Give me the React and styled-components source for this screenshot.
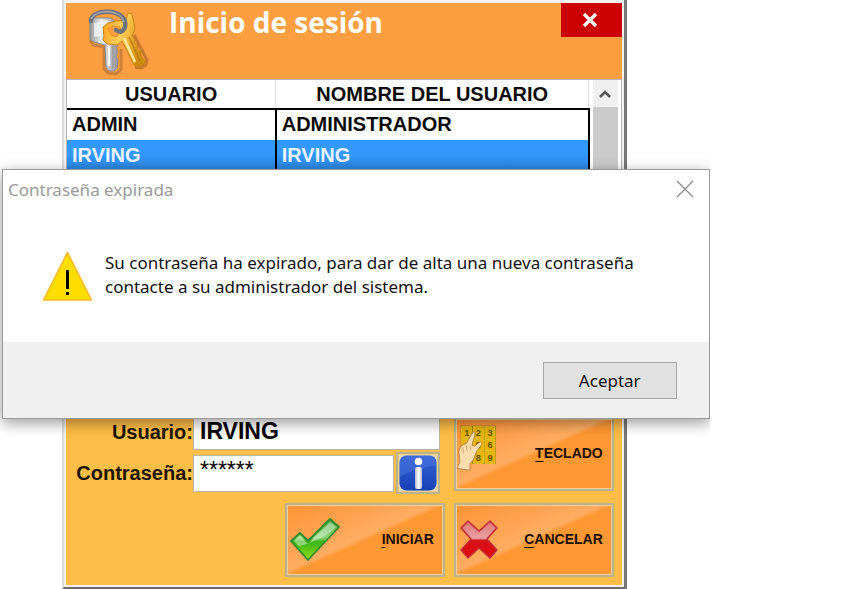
import React, { useState } from 'react';
import styled, { createGlobalStyle } from 'styled-components';

const GlobalStyle = createGlobalStyle`
  * {
    box-sizing: border-box;
  }
  body {
    margin: 0;
    background: #fff;
    font-family: 'Liberation Sans', Arial, sans-serif;
  }
  button, input {
    font-family: inherit;
    border-radius: 0;
  }
`;

const Desktop = styled.main`
  position: relative;
  width: 83.6%;
  padding-left: 62px;
  padding-right: 83px;
  overflow: hidden;
`;

const Window = styled.section`
  display: flex;
  flex-direction: column;
  padding: 3px 2px 2px;
  background: #f4f2f0;
  border-left: 2px solid #dcdcdc;
  border-right: 3px solid #777;
  border-bottom: 3px solid #6c6a6c;
`;

const TitleBar = styled.header`
  display: flex;
  align-items: flex-start;
  height: 76px;
  padding-left: 20px;
  background: #fd9f40;
`;

const KeysIcon = styled.svg`
  flex: none;
  width: 64px;
  height: 72px;
  margin-top: 2px;
`;

const Title = styled.h1`
  flex: 1;
  margin: 0 0 0 19px;
  font: 700 28px/38px 'Open Sans', 'Noto Sans', sans-serif;
  color: #fff;
`;

const CloseButton = styled.button`
  display: flex;
  align-items: center;
  justify-content: center;
  width: 61px;
  height: 34px;
  padding: 0;
  border: 0;
  background: #cb0000;
`;

const UserList = styled.div`
  display: flex;
  height: 324px;
  padding-right: 3px;
  background: #fff;
  border: 1px solid #b5b5b5;
`;

const Table = styled.table`
  flex: 1;
  align-self: flex-start;
  table-layout: fixed;
  border-collapse: collapse;
  font-size: 20px;
  font-weight: 700;
  line-height: 30px;
  color: #0c0c0c;
`;

const HeadCell = styled.th`
  width: ${(p) => p.$width || 'auto'};
  height: 29px;
  padding: 0;
  line-height: 28px;
  border-right: 1px solid #ddd;
  border-bottom: 2px solid #000;
`;

const Row = styled.tr`
  color: ${(p) => (p.$selected ? '#eaf4ff' : '#0c0c0c')};
  background: ${(p) => (p.$selected ? 'linear-gradient(#3399ff 40%, #2c85df)' : '#fff')};
`;

const Cell = styled.td`
  height: 31px;
  padding: 0 5px 2px;
  line-height: 28px;
  border-right: 2px solid #000;
`;

const ScrollBar = styled.div`
  display: flex;
  flex-direction: column;
  width: 25px;
  margin-left: 3px;
  background: #f0f0f0;
`;

const ScrollArrow = styled.button`
  display: flex;
  align-items: center;
  justify-content: center;
  height: 27px;
  padding: 0;
  border: 0;
  background: #f0f0f0;
`;

const ScrollThumb = styled.div`
  flex: 1;
  background: #cbcbcb;
`;

const Form = styled.form`
  display: grid;
  grid-template-columns: minmax(0, 1fr) 160px;
  align-items: center;
  gap: 9px 14px;
  padding: 10px 8px 8px;
  background: #ffbe48;
`;

const Fields = styled.div`
  display: flex;
  flex-direction: column;
  gap: 2px;
`;

const Field = styled.div`
  display: flex;
  align-items: center;
`;

const Label = styled.label`
  width: 119px;
  font-size: 20px;
  font-weight: 700;
  line-height: 24px;
  text-align: right;
  color: #1c1400;
`;

const Input = styled.input`
  flex: 1;
  min-width: 0;
  height: 37px;
  padding: 0 6px;
  font-size: 23px;
  font-weight: 700;
  color: #000;
  background: #fff;
  border: 1px solid #b9b6a4;
  outline: 0;
`;

const PasswordInput = styled(Input)`
  padding-bottom: 6px;
  font-weight: 400;
`;

const InfoButton = styled.button`
  width: 44px;
  height: 42px;
  margin-left: 2px;
  padding: 1px;
  border: 2px solid #b9b28c;
  background: #f3d08a;

  svg {
    display: block;
    width: 100%;
    height: 100%;
  }
`;

const Actions = styled.div`
  grid-column: 1 / -1;
  display: flex;
  justify-content: flex-end;
  gap: 9px;
`;

const ActionButton = styled.button`
  display: flex;
  align-items: center;
  justify-content: space-between;
  width: 160px;
  height: 74px;
  padding: 0 9px 0 1px;
  font-size: 14px;
  font-weight: 700;
  color: #1c1000;
  border: 2px solid #b9b28c;
  outline: 1px solid #f0d29a;
  outline-offset: -3px;
  background: linear-gradient(to bottom right, #ff9234 0%, #ffad62 47%, #ff9733 51%, #ff9733 100%);

  svg {
    width: 52px;
    height: 56px;
    margin-bottom: 12px;
  }
  span {
    margin-bottom: 2px;
  }
  u {
    text-underline-offset: 3px;
  }
`;

const Dialog = styled.div`
  position: absolute;
  top: 169px;
  left: 2px;
  right: 0;
  display: flex;
  flex-direction: column;
  font-family: 'Noto Sans', 'Open Sans', sans-serif;
  background: #fff;
  border: 1px solid #9b9b9b;
  box-shadow: 0 4px 14px rgba(0, 0, 0, 0.4);
`;

const DialogHeader = styled.div`
  display: flex;
  align-items: center;
  justify-content: space-between;
  height: 38px;
  padding: 0 15px 0 5px;
`;

const DialogTitle = styled.h2`
  margin: 0;
  font-size: 17px;
  font-weight: 400;
  color: #9a9a9a;
`;

const DialogClose = styled.button`
  display: flex;
  padding: 0;
  border: 0;
  background: none;
`;

const DialogBody = styled.div`
  display: flex;
  align-items: flex-start;
  gap: 12px;
  padding: 43px 20px 40px 39px;
`;

const Message = styled.p`
  margin: 0;
  font-size: 17px;
  line-height: 24px;
  color: #111;
`;

const DialogFooter = styled.div`
  display: flex;
  justify-content: flex-end;
  padding: 20px 32px 19px;
  background: #f0f0f0;
`;

const AcceptButton = styled.button`
  width: 134px;
  height: 37px;
  padding: 0;
  font-size: 17px;
  color: #111;
  background: #e1e1e1;
  border: 1px solid #a6a6a6;
`;

const users = [
  { user: 'ADMIN', name: 'ADMINISTRADOR' },
  { user: 'IRVING', name: 'IRVING' },
];

const Keys = () => (
  <KeysIcon viewBox="0 0 64 72" aria-hidden="true">
    <defs>
      <linearGradient id="silver" x1="0" x2="1">
        <stop offset="0" stopColor="#96999d" />
        <stop offset="0.4" stopColor="#e9eaeb" />
        <stop offset="1" stopColor="#94969b" />
      </linearGradient>
      <linearGradient id="gold" x1="0" x2="1" y2="0.4">
        <stop offset="0" stopColor="#ff9d1c" />
        <stop offset="0.5" stopColor="#ffcf58" />
        <stop offset="1" stopColor="#d08c10" />
      </linearGradient>
    </defs>
    <path d="M4 35l3 5 11 2v22l4 4 8 1 5-4V44" fill="none" stroke="#6b4a30" strokeWidth="3" opacity="0.35" />
    <path d="M48 30l13 25-1 5-5 3-6-1" fill="none" stroke="#8a4a14" strokeWidth="3" opacity="0.45" />
    <path d="M4 16l4-3h16l6 4v20l2 3-2 3 2 4-2 4 2 4-1 8-3 3h-5l-3-4-1-22-11-3-4-3z" fill="url(#silver)" stroke="#85878b" strokeWidth="1" />
    <path d="M8 18l13-3 3 3-9 13-7 1z" fill="#f3f4f4" opacity="0.8" />
    <path d="M23 39v22" stroke="#fafafa" strokeWidth="2.400" />
    <path d="M27 40v23" stroke="#9c9ea2" strokeWidth="1.600" />
    <path d="M17 22l5-4 9-2 9-1 2-7 4 1 3 15-3 7 3 4-1 3 4 2-1 4 4 3v4l4 5-1 4-5 2-5-2-12-24-5 4-10-1-4-4 1-4z" fill="url(#gold)" stroke="#cc8415" strokeWidth="1" />
    <path d="M38 33l11 24" stroke="#ffe79a" strokeWidth="2.600" />
    <path d="M43 32l11 24" stroke="#c07c10" strokeWidth="1.600" />
    <path d="M22 24l5-3 7 1 1 5-5 5-5-2z" fill="#fd9f40" stroke="#ec8f1c" strokeWidth="1" />
    <path d="M5 16C5 9 14 6 25 7c10 1 16 8 14 15-2 5-5 6-9 3" fill="none" stroke="#6d737d" strokeWidth="4.500" strokeLinecap="round" />
    <path d="M5 14C8 8 17 6 25 7c7 1 12 5 13 10" fill="none" stroke="#a3a9b3" strokeWidth="1.500" />
  </KeysIcon>
);

const Warning = () => (
  <svg width="51" height="51" viewBox="0 0 51 51" role="img" aria-label="Advertencia">
    <path d="M25.500 1.500L49.500 49H1.500z" fill="#ffde00" stroke="#fdb92e" strokeWidth="1.600" strokeLinejoin="round" />
    <path d="M24 19h3v19h-3zM24 41h3v3h-3z" fill="#000" />
  </svg>
);

const Info = () => (
  <svg viewBox="0 0 38 36" preserveAspectRatio="none" aria-hidden="true">
    <defs>
      <linearGradient id="blue" x2="0" y2="1">
        <stop offset="0" stopColor="#3564d6" />
        <stop offset="1" stopColor="#1740b4" />
      </linearGradient>
      <linearGradient id="stem">
        <stop offset="0" stopColor="#aab6cf" />
        <stop offset="0.5" stopColor="#fff" />
        <stop offset="1" stopColor="#b8c1d4" />
      </linearGradient>
    </defs>
    <rect width="38" height="36" fill="#ded8b8" />
    <rect x="0.500" y="0.500" width="37" height="35" rx="7" fill="url(#blue)" />
    <path d="M1 22V8c0-4 3-7 7-7h22c4 0 7 3 7 7v3C25 11 10 16 1 22z" fill="#4a76e0" opacity="0.5" />
    <circle cx="19.500" cy="6.500" r="3.800" fill="#fff" />
    <rect x="16" y="12" width="7" height="22" rx="2" fill="url(#stem)" />
  </svg>
);

const Keypad = () => (
  <svg viewBox="1 2 56 60" aria-hidden="true">
    <rect x="5" y="8" width="38" height="41" fill="#8b6a00" />
    {[1, 2, 3, 4, 5, 6, 7, 8, 9].map((n, i) => {
      const x = 6 + (i % 3) * 12.5;
      const y = 9 + Math.floor(i / 3) * 13.5;
      return (
        <g key={n}>
          <rect x={x} y={y} width="11" height="12.500" fill="#e6b400" stroke="#f3cf35" strokeWidth="0.800" />
          <text x={x + 5.5} y={y + 10} fontSize="10" fontWeight="700" textAnchor="middle" fill="#6b5400">{n}</text>
        </g>
      );
    })}
    <path d="M18 15c2-1 3 1 2 4l-3 10 3 1 5-4c2-1 4 0 2 3l-5 7-3 8-4 5 0 7-14-2 3-7-1-11 2-6 6-3z" fill="#fbdcae" stroke="#a97b45" strokeWidth="0.900" />
    <path d="M7 31l1 6M11 29l1 6M15 30l1 4" stroke="#c69a65" strokeWidth="0.900" fill="none" />
  </svg>
);

const Check = () => (
  <svg viewBox="0 0 52 56" aria-hidden="true">
    <defs>
      <linearGradient id="green" x2="0" y2="1">
        <stop offset="0" stopColor="#3fa73c" />
        <stop offset="0.45" stopColor="#8fd775" />
        <stop offset="0.55" stopColor="#3ab51c" />
        <stop offset="1" stopColor="#8ee010" />
      </linearGradient>
    </defs>
    <path d="M3 35l9-8 8 8 22-22 9 8-31 33z" fill="url(#green)" stroke="#2f8a2a" strokeWidth="1.800" strokeLinejoin="round" />
    <path d="M6 35l6-5 8 8 22-22 6 5c-9 9-21 15-37 19z" fill="#fff" opacity="0.4" />
  </svg>
);

const Cross = () => (
  <svg viewBox="0 0 52 56" aria-hidden="true">
    <defs>
      <linearGradient id="red" x2="0" y2="1">
        <stop offset="0" stopColor="#d6545a" />
        <stop offset="0.48" stopColor="#e78d8c" />
        <stop offset="0.52" stopColor="#d4141a" />
        <stop offset="1" stopColor="#e3060c" />
      </linearGradient>
    </defs>
    <path d="M4 22l7-7 11 10 11-10 7 7-10 11 10 11-7 8-11-10-11 10-7-8 10-11z" fill="url(#red)" stroke="#c33136" strokeWidth="1.500" strokeLinejoin="round" />
    <path d="M6 22l5-5 11 10 11-10 5 5-9 10H15z" fill="#fff" opacity="0.2" />
  </svg>
);

const App = () => {
  const [selected, setSelected] = useState('IRVING');
  const [password, setPassword] = useState('******');

  return (
    <>
      <GlobalStyle />
      <Desktop>
        <Window>
          <TitleBar>
            <Keys />
            <Title>Inicio de sesión</Title>
            <CloseButton type="button" aria-label="Cerrar">
              <svg width="18" height="18" viewBox="0 0 18 18">
                <path d="M2 3l12 12M14 3L2 15" stroke="#fff" strokeWidth="3.200" />
              </svg>
            </CloseButton>
          </TitleBar>
          <UserList>
            <Table>
              <thead>
                <tr>
                  <HeadCell $width="40%">USUARIO</HeadCell>
                  <HeadCell>NOMBRE DEL USUARIO</HeadCell>
                </tr>
              </thead>
              <tbody>
                {users.map(({ user, name }) => (
                  <Row key={user} $selected={user === selected} onClick={() => setSelected(user)}>
                    <Cell>{user}</Cell>
                    <Cell>{name}</Cell>
                  </Row>
                ))}
              </tbody>
            </Table>
            <ScrollBar>
              <ScrollArrow type="button" aria-label="Subir">
                <svg width="14" height="12" viewBox="0 0 14 12">
                  <path d="M2 9l5-5 5 5" fill="none" stroke="#555" strokeWidth="2.600" />
                </svg>
              </ScrollArrow>
              <ScrollThumb />
            </ScrollBar>
          </UserList>
          <Form onSubmit={(e) => e.preventDefault()}>
            <Fields>
              <Field>
                <Label htmlFor="usuario">Usuario:</Label>
                <Input id="usuario" value={selected} readOnly />
              </Field>
              <Field>
                <Label htmlFor="clave">Contraseña:</Label>
                <PasswordInput id="clave" value={password} onChange={(e) => setPassword(e.target.value)} />
                <InfoButton type="button" aria-label="Información">
                  <Info />
                </InfoButton>
              </Field>
            </Fields>
            <ActionButton type="button">
              <Keypad />
              <span><u>T</u>ECLADO</span>
            </ActionButton>
            <Actions>
              <ActionButton type="submit">
                <Check />
                <span><u>I</u>NICIAR</span>
              </ActionButton>
              <ActionButton type="button">
                <Cross />
                <span><u>C</u>ANCELAR</span>
              </ActionButton>
            </Actions>
          </Form>
        </Window>
        <Dialog role="alertdialog" aria-labelledby="aviso">
          <DialogHeader>
            <DialogTitle id="aviso">Contraseña expirada</DialogTitle>
            <DialogClose type="button" aria-label="Cerrar aviso">
              <svg width="18" height="18" viewBox="0 0 18 18">
                <path d="M1 1l16 16M17 1L1 17" stroke="#8c8c8c" strokeWidth="1.300" />
              </svg>
            </DialogClose>
          </DialogHeader>
          <DialogBody>
            <Warning />
            <Message>
              Su contraseña ha expirado, para dar de alta una nueva contraseña
              <br />
              contacte a su administrador del sistema.
            </Message>
          </DialogBody>
          <DialogFooter>
            <AcceptButton type="button">Aceptar</AcceptButton>
          </DialogFooter>
        </Dialog>
      </Desktop>
    </>
  );
};

export default App;
